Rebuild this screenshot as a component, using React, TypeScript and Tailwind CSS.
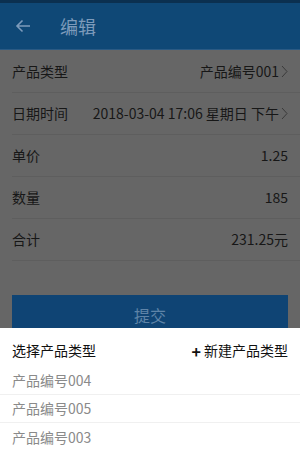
import React from "react";

const font = { fontFamily: '"Noto Sans CJK SC", "Noto Sans", sans-serif' };

function Chevron() {
  return (
    <svg width="7" height="13" viewBox="0 0 7 13" className="ml-[2px]">
      <path d="M1 1 L6 6.5 L1 12" fill="none" stroke="#3a3a3a" strokeWidth="1" />
    </svg>
  );
}

function Row({ label, value, chevron }: { label: string; value: string; chevron?: boolean }) {
  return (
    <div className="ml-3 h-[42px] flex items-center justify-between pr-3 border-b border-[#5e5e5e]">
      <span className="text-[14px] text-[#171717]">{label}</span>
      <span className="flex items-center text-[14px] text-[#171717]">
        {value}
        {chevron && <Chevron />}
      </span>
    </div>
  );
}

export default function App() {
  return (
    <div className="relative w-[300px] h-[450px] overflow-hidden bg-[#666666]" style={font}>
      <div className="h-[3px] bg-[#0b3050]" />
      <div className="h-[47px] bg-[#0f4876] flex items-center border-b border-[#2a5a84]">
        <svg width="16" height="14" viewBox="0 0 16 14" className="ml-[15px]">
          <path d="M15 7 H2 M7.5 1.5 L2 7 L7.5 12.5" fill="none" stroke="#7d9bbb" strokeWidth="1.6" />
        </svg>
        <span className="ml-[29px] text-[18px] text-[#7d9bbb]">编辑</span>
      </div>
      <div className="pt-px">
        <Row label="产品类型" value="产品编号001" chevron />
        <Row label="日期时间" value="2018-03-04 17:06 星期日 下午" chevron />
        <Row label="单价" value="1.25" />
        <Row label="数量" value="185" />
        <Row label="合计" value="231.25元" />
      </div>
      <div className="mx-3 mt-[34px] h-[40px] bg-[#0f4474] flex items-center justify-center text-[16px] text-[#5f84a8]">
        提交
      </div>
      <div className="absolute left-0 right-0 bottom-0 top-[328px] bg-white">
        <div className="h-[39px] pt-[6px] flex items-center justify-between px-3 text-[14px] text-[#111]">
          <span>选择产品类型</span>
          <span className="flex items-center">
            <span className="font-bold text-[16px] mr-[3px] leading-none">+</span>新建产品类型
          </span>
        </div>
        {["产品编号004", "产品编号005", "产品编号003"].map((t, i) => (
          <div key={t} className={`h-[28px] flex items-center px-3 text-[14px] text-[#8a8a8a] ${i < 2 ? "border-b border-[#f0f0f0]" : ""}`}>
            {t}
          </div>
        ))}
      </div>
    </div>
  );
}
